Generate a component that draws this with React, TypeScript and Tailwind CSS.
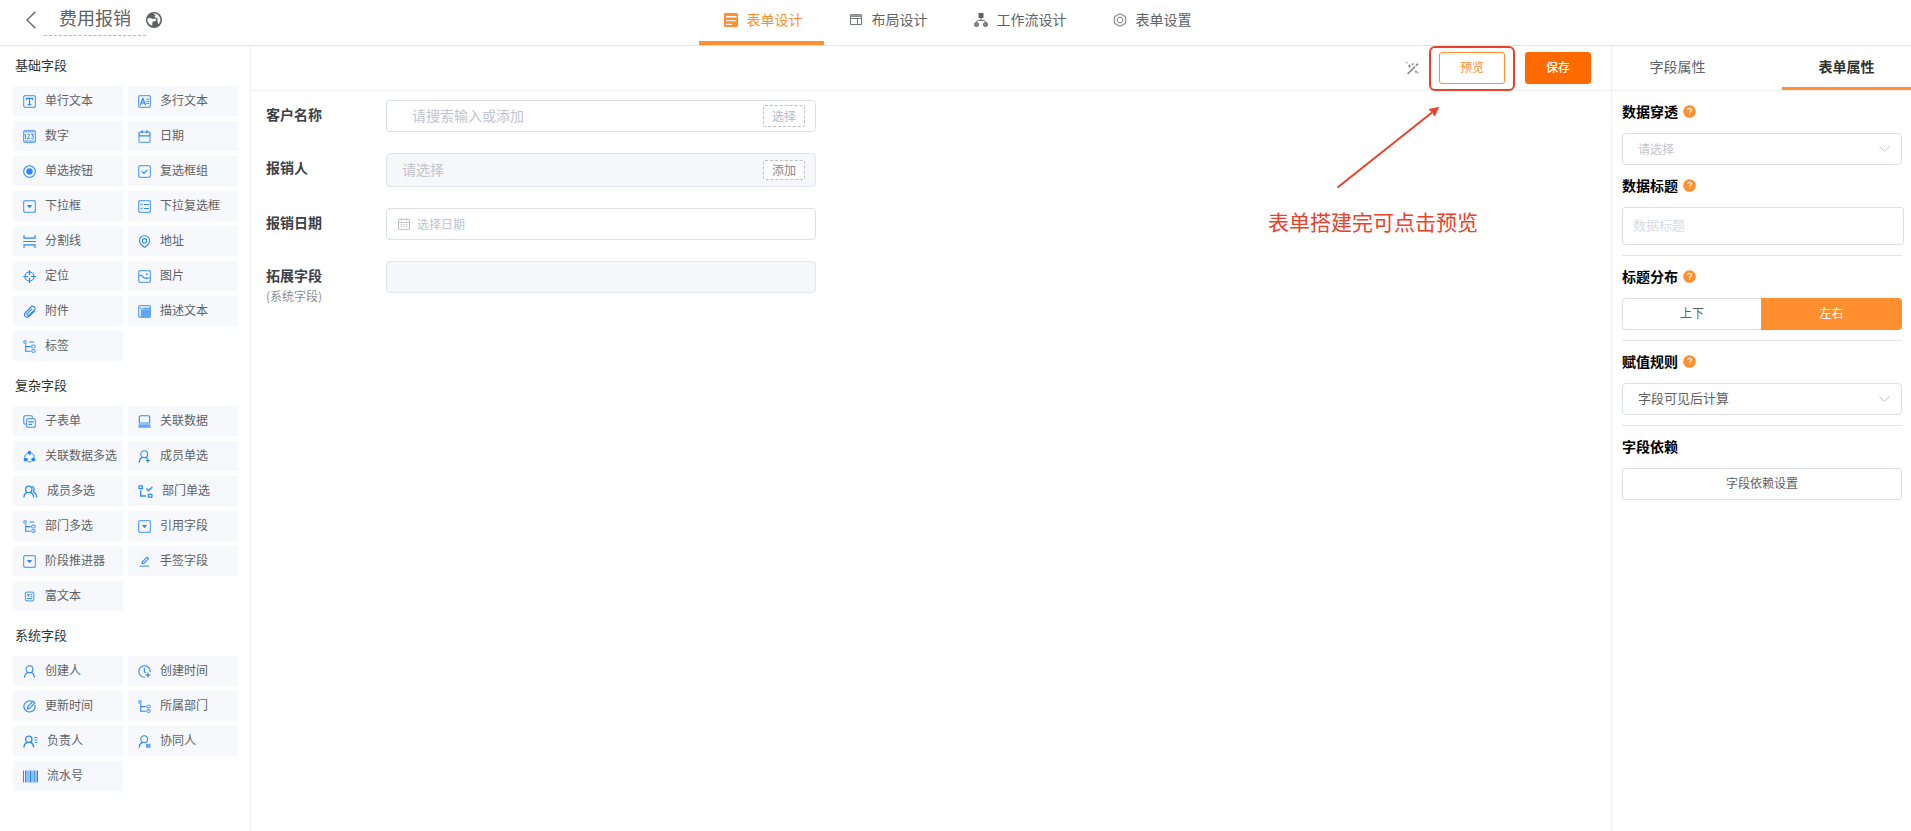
import type { ReactNode } from 'react';

const BLUE = '#2b88f7';
const SOFT = '#64a4f9';

function Svg({ children, w = 13 }: { children: ReactNode; w?: number }) {
  return (
    <svg
      width={w}
      height={13}
      viewBox={`0 0 ${w} 13`}
      fill="none"
      stroke={BLUE}
      strokeWidth={1}
      strokeLinecap="round"
      strokeLinejoin="round"
      aria-hidden="true"
      className="mt-[1px] shrink-0"
    >
      {children}
    </svg>
  );
}

const frame = <rect x="0.6" y="0.6" width="11.8" height="11.8" rx="1.8" stroke={SOFT} strokeWidth="1.3" />;

const dropdown = (
  <Svg>
    {frame}
    <path d="M3.8 5h5.4L6.5 8.200z" fill={BLUE} stroke="none" />
  </Svg>
);

const orgTree = (
  <Svg>
    <circle cx="2" cy="2" r="1.3" stroke={SOFT} strokeWidth="1.2" />
    <path d="M6.8 2H10.800" strokeWidth="1.2" />
    <path d="M2.7 4.800v6.400h4.600M2.7 6.6h4.600" strokeWidth="1.1" />
    <rect x="8.6" y="5.200" width="3.6" height="2.8" rx="1.2" stroke={SOFT} strokeWidth="1.2" />
    <rect x="8.6" y="9.7" width="3.6" height="2.6" rx="1.2" stroke={SOFT} strokeWidth="1.2" />
  </Svg>
);

const orgLink = (
  <Svg>
    <circle cx="2" cy="2" r="1.3" stroke={SOFT} strokeWidth="1.2" />
    <path d="M2.7 4.500v6.700h4.600M2.7 6.6h4.600" strokeWidth="1.1" />
    <rect x="8.8" y="5" width="3.4" height="2.8" rx="1.2" stroke={SOFT} strokeWidth="1.2" />
    <rect x="8.8" y="9.7" width="3.4" height="2.6" rx="1.2" stroke={SOFT} strokeWidth="1.2" />
  </Svg>
);

const icons: Record<string, ReactNode> = {
  text: (
    <Svg>
      {frame}
      <path d="M3.5 4.6V3.4h6v1.2M6.5 3.4v6.2M5.2 9.6h2.6" strokeWidth="1.2" />
    </Svg>
  ),
  textarea: (
    <Svg>
      {frame}
      <path d="M2.4 9.8 4.9 3.3l2.5 6.500M3.4 7.8h3" strokeWidth="1.2" />
      <path d="M8.600 4.2h2M8.600 6.4h2M8.600 8.6h2" />
    </Svg>
  ),
  number: (
    <Svg>
      {frame}
      <path d="M1.8 4.8l.8-.6v4.6M4.6 4.7c.4-.8 2-.6 1.8.6 0 .9-1.8 2.2-1.9 3.4h2M8.4 4.3h2.1L9.3 6.2c1.8 0 1.6 2.8-.1 2.6-.5 0-.8-.2-1-.6" />
      <path d="M2 1.900h9M2 11h9" stroke={SOFT} />
    </Svg>
  ),
  date: (
    <Svg>
      <path d="M1 5.8V3.2C1 2.6 1.4 2 2.2 2h8.6c.8 0 1.2.6 1.2 1.2v2.6M1 5.8h11M4 .7v2.2M9 .7v2.2" strokeWidth="1.2" />
      <path d="M1 6v4.9c0 .8.5 1.4 1.3 1.4h8.4c.8 0 1.3-.6 1.3-1.4V6" stroke={SOFT} strokeWidth="1.2" />
    </Svg>
  ),
  radio: (
    <Svg>
      <circle cx="6.5" cy="6.5" r="5.8" strokeWidth="1.1" />
      <circle cx="6.5" cy="6.5" r="3.2" fill={BLUE} stroke="none" />
    </Svg>
  ),
  checkbox: (
    <Svg>
      {frame}
      <path d="M4 6.600l2 1.700 3-3.200" strokeWidth="1.2" />
    </Svg>
  ),
  dropdown,
  multiDropdown: (
    <Svg>
      {frame}
      <path d="M2.600 4.4l.9.800 1.200-1.500M2.600 8.4l.9.800 1.200-1.500M6.500 4.500h4M6.500 8.500h4" />
    </Svg>
  ),
  divider: (
    <Svg>
      <path d="M.6 6.5h12" strokeWidth="1.200" />
      <path d="M1 .6v2.600h11V.6M1 12.400V9.800h11v2.600" strokeWidth="1.200" />
    </Svg>
  ),
  address: (
    <Svg>
      <path d="M6.5.7c3 0 5.100 2.200 5.100 5 0 3-2.500 4.700-5.100 6.700C3.900 10.400 1.400 8.700 1.400 5.700c0-2.800 2.100-5 5.100-5z" strokeWidth="1.100" />
      <circle cx="6.500" cy="5.800" r="2.200" strokeWidth="1.100" />
    </Svg>
  ),
  locate: (
    <Svg>
      <circle cx="6.500" cy="6.500" r="4.500" strokeWidth="1.200" />
      <path d="M6.500.6v4M6.500 8.400v4M.6 6.500h4M8.400 6.500h4" strokeWidth="1.200" />
    </Svg>
  ),
  image: (
    <Svg>
      {frame}
      <path d="M1.200 6c2-1.400 3-.4 3.800.8 1 1.600 2.200 2 3.400.8M8 8.400c1.200-.2 2-.6 3.400-.4" strokeWidth="1.100" />
      <circle cx="8.800" cy="4.200" r=".9" fill={BLUE} stroke="none" />
    </Svg>
  ),
  attach: (
    <Svg>
      <path d="M11.500 6.200 6.500 11.200c-1.300 1.300-3 1.400-4.200.4-1.100-1.100-1-2.800.3-4.100L7.900 2c1.100-1.100 2.600-1.100 3.500-.2 1 .9.900 2.300-.1 3.300L6.300 10c-.7.700-1.500.7-2 .200-.5-.5-.4-1.200.2-1.900L8.800 4" strokeWidth="1.100" />
    </Svg>
  ),
  description: (
    <Svg>
      <path d="M2.800 4.300h9.400v8.200H2.800z" fill={SOFT} stroke="none" />
      {frame}
      <path d="M2 3.300h1.200M5 3.300h6.500" />
    </Svg>
  ),
  tag: orgTree,
  subform: (
    <Svg>
      <path d="M3.200 9.200H2.400C1.400 9.200.7 8.600.7 7.600V2.400C.7 1.400 1.400.7 2.400.7h5.400c1 0 1.600.7 1.600 1.700" stroke={SOFT} strokeWidth="1.300" />
      <rect x="3.500" y="3.600" width="8.900" height="8.800" rx="1.800" strokeWidth="1.300" stroke={SOFT} />
      <path d="M5.800 6.800h4.500M6 9.300h2.500" strokeWidth="1.300" />
    </Svg>
  ),
  related: (
    <Svg>
      <path d="M1.300 8V2.200C1.300 1.300 1.900.7 2.800.7h7.400c.9 0 1.500.6 1.500 1.500V8z" strokeWidth="1.100" />
      <rect x=".5" y="9.300" width="12" height="3.500" fill={SOFT} stroke="none" />
    </Svg>
  ),
  relatedMulti: (
    <Svg>
      <path d="M4 3.600C2.600 4.300 1.800 5.400 1.700 6.800M9 3.600c1.400.7 2.200 1.800 2.300 3.200M4.800 11.700c1.100.4 2.300.4 3.400 0" />
      <circle cx="6.500" cy="2.800" r="2" fill={BLUE} stroke="none" />
      <circle cx="2.700" cy="9.500" r="2.100" fill={BLUE} stroke="none" />
      <circle cx="10.300" cy="9.500" r="2.100" fill={BLUE} stroke="none" />
    </Svg>
  ),
  memberAdd: (
    <Svg>
      <circle cx="6.200" cy="4.200" r="3.400" strokeWidth="1.100" />
      <path d="M1.200 12.200c.2-2.700 1.600-4.200 3.300-4.800M7.800 7.400l1 .7M9.800 8.800v3.400M8.100 10.500h3.400" strokeWidth="1.200" />
    </Svg>
  ),
  memberMulti: (
    <Svg w={15}>
      <circle cx="5.800" cy="4.300" r="3.200" strokeWidth="1.200" />
      <path d="M.9 12c.3-2.500 1.500-3.900 3.200-4.600M7.500 7.400c1.700.7 2.900 2.100 3.200 4.600M9.600 1.600c1.800 1 2 3.800.7 5.100 1.900 1 3.200 2.900 3.500 5.300" strokeWidth="1.200" />
    </Svg>
  ),
  deptSingle: (
    <Svg w={15}>
      <rect x="1" y=".9" width="3.400" height="2.800" strokeWidth="1.200" />
      <path d="M2.700 6v5h4.800M8.600 4l1.900 1.800L14 2.200" strokeWidth="1.300" />
      <rect x="10.300" y="9.400" width="3.600" height="2.800" strokeWidth="1.200" />
    </Svg>
  ),
  deptMulti: orgTree,
  reference: dropdown,
  stage: dropdown,
  signature: (
    <Svg>
      <path d="M4 8.800l.5-2.200L9 2.100l1.500 1.500L6 8.200z" strokeWidth="1.100" />
      <path d="M2.200 11.200h8.600" stroke={SOFT} strokeWidth="1.300" />
    </Svg>
  ),
  rich: (
    <Svg>
      <rect x="2.400" y="2.200" width="8.400" height="8.600" rx="1.400" stroke={SOFT} strokeWidth="1.200" />
      <path d="M4.300 4.700h2M5.300 4.700v1.800M8 4.700h.9M8 6.500h.9M4.300 8.600h4.600" />
    </Svg>
  ),
  creator: (
    <Svg>
      <circle cx="6.500" cy="4.200" r="3.400" strokeWidth="1.100" />
      <path d="M1.500 12.200c.2-2.700 1.600-4.200 3.300-4.800M8.200 7.400c1.700.6 3.100 2.100 3.300 4.800" strokeWidth="1.100" />
    </Svg>
  ),
  createTime: (
    <Svg>
      <path d="M6.500 12.200A5.700 5.700 0 1 1 12.200 6.500" strokeWidth="1.100" />
      <path d="M6.300 3v3.800l1.400.9M9.900 8.200v3.800M8 10.100h3.800" strokeWidth="1.200" />
    </Svg>
  ),
  updateTime: (
    <Svg>
      <path d="M8.800 1.300A5.600 5.600 0 1 0 12 5.400" strokeWidth="1.100" />
      <path d="M4.200 9l.5-2.300L10.200 1.200l1.700 1.600-5.500 5.600z" strokeWidth="1.100" />
    </Svg>
  ),
  dept: orgLink,
  owner: (
    <Svg w={15}>
      <circle cx="5.800" cy="4.300" r="3.200" strokeWidth="1.300" />
      <path d="M.9 12c.3-2.500 1.500-3.900 3.200-4.600M7.500 7.400c1.700.7 2.900 2.100 3.200 4.600" strokeWidth="1.300" />
      <path d="M11.600 2.500h2.400M11.600 5h2.400M12.600 7.500h1.400" />
    </Svg>
  ),
  partner: (
    <Svg>
      <circle cx="6.200" cy="4.200" r="3.400" strokeWidth="1.100" />
      <path d="M1.200 12.200c.2-2.700 1.600-4.200 3.300-4.800" strokeWidth="1.200" />
      <rect x="8" y="8.800" width="4.500" height="4" fill={SOFT} stroke="none" />
    </Svg>
  ),
  serial: (
    <Svg w={15}>
      <g fill={BLUE} stroke="none">
        <path d="M0 .5h1v12H0zM2 .5h1.500v12H2zM4.500.5h1v12h-1zM6.500.5h2v12h-2zM9.500.5h1v12h-1zM11.200.5h1.300v12h-1.300zM13.500.5H15v12h-1.500z" />
      </g>
    </Svg>
  ),
};

const sections: { title: string; items: [string, string][] }[] = [
  {
    title: '基础字段',
    items: [
      ['text', '单行文本'],
      ['textarea', '多行文本'],
      ['number', '数字'],
      ['date', '日期'],
      ['radio', '单选按钮'],
      ['checkbox', '复选框组'],
      ['dropdown', '下拉框'],
      ['multiDropdown', '下拉复选框'],
      ['divider', '分割线'],
      ['address', '地址'],
      ['locate', '定位'],
      ['image', '图片'],
      ['attach', '附件'],
      ['description', '描述文本'],
      ['tag', '标签'],
    ],
  },
  {
    title: '复杂字段',
    items: [
      ['subform', '子表单'],
      ['related', '关联数据'],
      ['relatedMulti', '关联数据多选'],
      ['memberAdd', '成员单选'],
      ['memberMulti', '成员多选'],
      ['deptSingle', '部门单选'],
      ['deptMulti', '部门多选'],
      ['reference', '引用字段'],
      ['stage', '阶段推进器'],
      ['signature', '手签字段'],
      ['rich', '富文本'],
    ],
  },
  {
    title: '系统字段',
    items: [
      ['creator', '创建人'],
      ['createTime', '创建时间'],
      ['updateTime', '更新时间'],
      ['dept', '所属部门'],
      ['owner', '负责人'],
      ['partner', '协同人'],
      ['serial', '流水号'],
    ],
  },
];

function Sidebar() {
  return (
    <aside className="w-[251px] shrink-0 border-r border-[#efefef] pr-3 pl-[13px]">
      {sections.map((s) => (
        <section key={s.title} className="pb-[5px]">
          <h2 className="flex h-10 items-center pb-[2px] pl-[2px] text-[13px] text-[#303133]">{s.title}</h2>
          <ul className="grid grid-cols-2 gap-[5px]">
            {s.items.map(([icon, label]) => (
              <li key={label}>
                <button type="button" className="flex h-[30px] w-full items-center gap-[9px] bg-[#f6f8fb] pl-[10px] text-xs whitespace-nowrap text-[#606266]">
                  {icons[icon]}
                  <span className="pb-[2px]">{label}</span>
                </button>
              </li>
            ))}
          </ul>
        </section>
      ))}
    </aside>
  );
}

const navIcons = {
  form: (
    <svg width="14" height="14" viewBox="0 0 14 14" aria-hidden="true">
      <path fill="#ff8f2f" fillRule="evenodd" d="M1.500 0h11c.9 0 1.500.6 1.500 1.500v11c0 .9-.6 1.500-1.500 1.500h-11C.6 14 0 13.400 0 12.500v-11C0 .6.6 0 1.500 0zM2 3v1.500h10.500V3zm0 4v1.200h10V7zm0 3.800V12h6v-1.200z" />
    </svg>
  ),
  layout: (
    <svg width="14" height="14" viewBox="0 0 14 14" fill="none" stroke="#77787a" aria-hidden="true">
      <path d="M1.500 1.500h11v2h-11z" fill="#9a9b9d" stroke="#8a8b8d" />
      <path d="M1.500 3.500v8h11v-8M1.500 5.500h11M8.500 5.500v6" />
    </svg>
  ),
  flow: (
    <svg width="14" height="14" viewBox="0 0 14 14" fill="none" stroke="#606266" aria-hidden="true">
      <path d="M4.500 0h5v5h-5z" fill="#606266" stroke="none" />
      <path d="M7 5v2.500M2.500 9.500c0-1.600.6-2.200 2-2.200h5c1.400 0 2 .6 2 2.200" />
      <rect x=".7" y="9.700" width="3.600" height="3.600" rx=".8" fill="#8e8f92" />
      <rect x="9.700" y="9.700" width="3.600" height="3.600" rx=".8" fill="#8e8f92" />
    </svg>
  ),
  settings: (
    <svg width="14" height="14" viewBox="0 0 14 14" fill="none" stroke="#77787a" strokeLinejoin="round" aria-hidden="true">
      <path d="M4.800 1.200h4.400l.8 1.600 2 .2L13 7l-1 4-2 .2-.8 1.600H4.800L4 11.200l-2-.2L1 7l1-4 2-.2z" />
      <path d="M5.500 4.300h3L10 7 8.500 9.700h-3L4 7z" />
    </svg>
  ),
};

const tabs = [
  { icon: navIcons.form, label: '表单设计', active: true },
  { icon: navIcons.layout, label: '布局设计', active: false },
  { icon: navIcons.flow, label: '工作流设计', active: false },
  { icon: navIcons.settings, label: '表单设置', active: false },
];

function Header() {
  return (
    <header className="flex h-[46px] shrink-0 border-b border-[#e4e4e4]">
      <div className="flex flex-1 items-start">
        <button type="button" aria-label="返回" className="mt-[11px] ml-[26px] text-[#606266]">
          <svg width="10" height="18" viewBox="0 0 10 18" fill="none" stroke="currentColor" strokeWidth="1.300" aria-hidden="true">
            <path d="M9.400.7 1 9l8.400 8.300" />
          </svg>
        </button>
        <h1 className="ml-2 flex h-9 w-[102px] items-center justify-center border-b border-dashed border-[#b4b4b4] pb-[1px] text-lg text-[#606266]">
          费用报销
        </h1>
        <svg width="16" height="16" viewBox="0 0 16 16" className="mt-3" aria-hidden="true">
          <circle cx="8" cy="8" r="8" fill="#606266" />
          <path d="M1.600 6.400 3.800 6c1.600-.2 2 .8 3.400.9 1.200.1 1.600-.4 2.500 0 1 .5.600 1.600-.3 2-.9.300-2.200.200-2.700 1-.6 1.100-.300 2.200-.4 3.700C2.800 12.400 1 9.600 1.600 6.400z" fill="#fff" />
          <path d="M7 1.600c2.600-.4 4.300.4 5.800 2.200.8 1 1.600 2.600 1.600 4.200-.2 1.700-.8 3-1.900 4.200-.7-.7-.3-1.700-.900-2.400-.5-.6-.2-1.500.2-2.200.4-.800-.600-1.300-1.300-1.700-.8-.5-1.700-.2-1.900-.9-.2-.8 1-.9.800-1.700C9.200 2.500 7.800 2.500 7 1.600z" fill="#fff" />
        </svg>
      </div>
      <nav className="flex">
        {tabs.map((t) => (
          <a
            key={t.label}
            href="#"
            className={
              t.active
                ? 'flex h-[45px] items-center gap-[9px] border-b-4 border-[#ff8f2f] pr-[21px] pb-[1px] pl-[25px] text-sm text-[#ff8f2f]'
                : 'flex h-[45px] items-center gap-[9px] border-b-4 border-transparent pr-[21px] pb-[1px] pl-[25px] text-sm text-[#606266]'
            }
          >
            {t.icon}
            <span className="pb-[3px]">{t.label}</span>
          </a>
        ))}
      </nav>
      <div className="flex-1" />
    </header>
  );
}

function Toolbar() {
  return (
    <div className="flex h-[45px] items-center justify-end gap-5 border-b border-[#efefef] pr-5">
      <button type="button" aria-label="智能美化">
        <svg width="13" height="13" viewBox="0 0 13 13" fill="#8a8b8e" aria-hidden="true">
          <path d="M1 11.400 8.400 4l1.200 1.200L2.200 12.600zM9.200 3.200 11.400 1l1.200 1.200-2.200 2.200z" />
          <path d="M3.500 2l.7 1.400 1.400.7-1.400.7-.7 1.400-.7-1.400-1.400-.7 1.400-.7zM.2 0h1.300v1.300H.2zM5.800 1.300l1.800.2-.2 1.700-1.700-.2zM9.500 8.600l1.700.6-.7 1.700-1.700-.6zM11.300 10.300h1.300v1.300h-1.300z" />
        </svg>
      </button>
      <div className="relative flex">
        <button type="button" className="h-8 w-[66px] rounded-[3px] border border-[#ff8f2f] pb-[2px] text-xs text-[#ff8f2f]">
          预览
        </button>
        <div className="pointer-events-none absolute -top-[6px] -right-[10px] -bottom-[7px] -left-[10px] rounded-md border-2 border-[#e9412a]" />
        <svg className="pointer-events-none absolute top-[53px] right-[65px]" width="104" height="84" viewBox="0 0 104 84" fill="none" aria-hidden="true">
          <path d="M1.500 82.500 96 7.500" stroke="#e9412a" strokeWidth="2" />
          <path d="M102.500 2.500 93 4.500l3.500 2.500L98.500 11z" fill="#e9412a" stroke="#e9412a" strokeLinejoin="round" />
        </svg>
        <p className="pointer-events-none absolute top-[154px] right-[27px] text-[21px] leading-[30px] whitespace-nowrap text-[#e9412a]">
          表单搭建完可点击预览
        </p>
      </div>
      <button type="button" className="h-8 w-[66px] rounded-[3px] bg-[#ff6a00] pb-[2px] text-xs font-medium text-white">
        保存
      </button>
    </div>
  );
}

const labelCls = 'w-[120px] shrink-0 text-sm leading-[29px] font-bold text-[#3d4047]';
const fieldCls = 'flex w-[430px] items-center rounded border pr-[10px]';
const inputCls = 'min-w-0 flex-1 bg-transparent pb-[2px] text-sm outline-none placeholder:text-[#c0c4cc]';

function Canvas() {
  return (
    <main className="min-w-0 flex-1">
      <Toolbar />
      <form className="flex flex-col gap-[21px] px-[15px] pt-[9px]">
        <div className="flex">
          <label htmlFor="customer" className={labelCls}>客户名称</label>
          <div className={`${fieldCls} h-8 border-[#dcdfe6] pl-[25px]`}>
            <input id="customer" className={inputCls} placeholder="请搜索输入或添加" />
            <button type="button" className="h-[22px] w-[42px] rounded-[2px] border border-dashed border-[#c0c0c0] text-xs leading-[18px] text-[#b6b9bf]">
              选择
            </button>
          </div>
        </div>
        <div className="flex">
          <label htmlFor="claimant" className={labelCls}>报销人</label>
          <div className={`${fieldCls} h-[34px] border-[#e1e4ea] bg-[#f5f7fa] pl-[15px]`}>
            <input id="claimant" className={inputCls} placeholder="请选择" />
            <button type="button" className="h-5 w-[42px] rounded-[2px] border border-dashed border-[#c0c0c0] bg-white text-xs leading-[18px] text-[#85878c]">
              添加
            </button>
          </div>
        </div>
        <div className="flex">
          <label htmlFor="date" className={labelCls}>报销日期</label>
          <div className={`${fieldCls} h-8 gap-[7px] border-[#dcdfe6] pl-[11px]`}>
            <svg width="12" height="12" viewBox="0 0 12 12" fill="none" stroke="#c0c4cc" aria-hidden="true">
              <path d="M.5 1.500h11v10H.5zM.5 4.500h11M3.500 0v2.500M8.500 0v2.500M2.500 6.500h1.500M5.200 6.500h1.500M8 6.500h1.500M2.500 8.500h1.500M5.200 8.500h1.500M8 8.500h1.500" />
            </svg>
            <input id="date" className="min-w-0 flex-1 bg-transparent pb-[1px] text-xs outline-none placeholder:text-[#c0c4cc]" placeholder="选择日期" />
          </div>
        </div>
        <div className="flex h-8">
          <label htmlFor="extend" className={labelCls}>
            拓展字段
            <span className="block text-xs leading-3 font-normal text-[#8b8e94]">(系统字段)</span>
          </label>
          <input id="extend" disabled className="h-8 w-[430px] rounded border border-[#e1e4ea] bg-[#f5f7fa] px-3 text-sm" />
        </div>
      </form>
    </main>
  );
}

function Help() {
  return (
    <svg width="13" height="13" viewBox="0 0 13 13" fill="none" className="mt-[2px]" aria-hidden="true">
      <circle cx="6.500" cy="6.500" r="6.300" fill="#ff8f2f" />
      <path d="M4.700 5.100c0-2.400 3.700-2.400 3.700 0 0 1.300-1.800 1.300-1.800 2.600" stroke="#fff" strokeWidth="1.100" />
      <path d="M6 8.800h1.200V10H6z" fill="#fff" />
    </svg>
  );
}

const propLabel = 'flex h-[42px] items-center gap-[5px] pb-[3px] text-sm font-bold text-black';

function Select({ id, value, muted }: { id: string; value: string; muted?: boolean }) {
  return (
    <div className="relative">
      <select
        id={id}
        className={
          muted
            ? 'h-8 w-full appearance-none rounded border border-[#dcdfe6] bg-white px-[15px] pb-[1px] text-xs text-[#c0c4cc] outline-none'
            : 'h-8 w-full appearance-none rounded border border-[#dcdfe6] bg-white px-[15px] pb-[2px] text-[13px] text-[#606266] outline-none'
        }
      >
        <option>{value}</option>
      </select>
      <svg className="pointer-events-none absolute top-[13px] right-3" width="11" height="7" viewBox="0 0 11 7" fill="none" stroke="#c0c4cc" aria-hidden="true">
        <path d="M.5.500l5 5 5-5" />
      </svg>
    </div>
  );
}

function Properties() {
  return (
    <aside className="w-[300px] shrink-0 border-l border-[#efefef]">
      <div role="tablist" className="flex h-[45px] border-b border-[#efefef] text-sm">
        <button type="button" role="tab" aria-selected="false" className="flex-1 pr-[39px] pb-[4px] text-[#606266]">
          字段属性
        </button>
        <button type="button" role="tab" aria-selected="true" className="w-[129px] border-b-3 border-[#ff8f2f] pb-[1px] font-bold text-[#303133]">
          表单属性
        </button>
      </div>
      <div className="pr-[9px] pl-[10px]">
        <label htmlFor="through" className={propLabel}>
          数据穿透
          <Help />
        </label>
        <Select id="through" value="请选择" muted />
        <label htmlFor="title" className={propLabel}>
          数据标题
          <Help />
        </label>
        <div className="-mr-[2px] flex">
          <input
            id="title"
            placeholder="数据标题"
            className="h-[38px] w-full rounded-[3px] border border-[#dcdfe6] px-[10px] pb-[4px] text-[13px] outline-none placeholder:text-[#d9dce3]"
          />
        </div>
        <hr className="mt-[10px] border-[#e4e4e4]" />
        <div className={propLabel}>
          标题分布
          <Help />
        </div>
        <div className="flex h-8 text-xs">
          <button type="button" className="w-[139px] rounded-l border border-r-0 border-[#dcdfe6] pb-[2px] text-[#606266]">
            上下
          </button>
          <button type="button" className="flex-1 rounded-r bg-[#ff8f2f] pb-[2px] text-white">
            左右
          </button>
        </div>
        <hr className="mt-[10px] border-[#e4e4e4]" />
        <label htmlFor="rule" className={propLabel}>
          赋值规则
          <Help />
        </label>
        <Select id="rule" value="字段可见后计算" />
        <hr className="mt-[10px] border-[#e4e4e4]" />
        <div className={propLabel}>字段依赖</div>
        <button type="button" className="h-8 w-full rounded-[3px] border border-[#dcdfe6] pb-[2px] text-xs text-[#606266]">
          字段依赖设置
        </button>
      </div>
    </aside>
  );
}

export default function App() {
  return (
    <div className="flex min-h-screen flex-col bg-white font-['Noto_Sans_CJK_SC','Noto_Sans',sans-serif]">
      <Header />
      <div className="flex flex-1">
        <Sidebar />
        <Canvas />
        <Properties />
      </div>
    </div>
  );
}
